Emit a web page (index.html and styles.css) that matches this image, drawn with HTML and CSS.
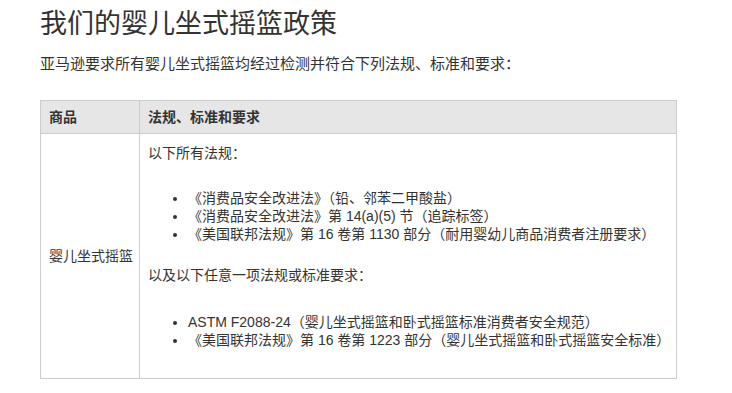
FILE: index.html
```html
<!DOCTYPE html>
<html lang="zh-CN">
<head>
<meta charset="utf-8">
<title>我们的婴儿坐式摇篮政策</title>
<link rel="stylesheet" href="styles.css">
</head>
<body>
<main class="page">
  <h1 class="title">我们的婴儿坐式摇篮政策</h1>
  <p class="intro">亚马逊要求所有婴儿坐式摇篮均经过检测并符合下列法规、标准和要求：</p>
  <table class="policy">
    <colgroup>
      <col class="col-product">
      <col class="col-req">
    </colgroup>
    <thead>
      <tr>
        <th>商品</th>
        <th>法规、标准和要求</th>
      </tr>
    </thead>
    <tbody>
      <tr>
        <td class="product">婴儿坐式摇篮</td>
        <td class="reqs">
          <p class="lead">以下所有法规：</p>
          <ul class="list list-first">
            <li>《消费品安全改进法》（铅、邻苯二甲酸盐）</li>
            <li>《消费品安全改进法》第 14(a)(5) 节（追踪标签）</li>
            <li>《美国联邦法规》第 16 卷第 1130 部分（耐用婴幼儿商品消费者注册要求）</li>
          </ul>
          <p class="lead">以及以下任意一项法规或标准要求：</p>
          <ul class="list list-last">
            <li>ASTM F2088-24（婴儿坐式摇篮和卧式摇篮标准消费者安全规范）</li>
            <li>《美国联邦法规》第 16 卷第 1223 部分（婴儿坐式摇篮和卧式摇篮安全标准）</li>
          </ul>
        </td>
      </tr>
    </tbody>
  </table>
</main>
</body>
</html>
```

FILE: styles.css
```css
html, body {
  margin: 0;
  padding: 0;
  background: #ffffff;
}

body {
  font-family: "Liberation Sans", "Noto Sans CJK SC", sans-serif;
  color: #333333;
}

.page {
  padding: 0 40px;
}

.title {
  margin: 6px 0 11px;
  font-size: 27px;
  line-height: 36px;
  font-weight: normal;
  color: #333333;
}

.intro {
  margin: 0 0 25px;
  font-size: 15px;
  line-height: 22px;
}

.policy {
  width: 637px;
  border-collapse: collapse;
  table-layout: fixed;
  font-size: 14px;
}

.col-product {
  width: 99px;
}

.policy th,
.policy td {
  border: 1px solid #cccccc;
  text-align: left;
}

.policy th {
  background: #e6e6e6;
  font-weight: bold;
  padding: 5px 8px;
  line-height: 22px;
}

.product {
  vertical-align: middle;
  padding: 0 8px;
  line-height: 20px;
  white-space: nowrap;
}

.reqs {
  vertical-align: top;
  padding: 8px 8px 7px;
}

.lead {
  margin: 0;
  line-height: 22px;
}

.list {
  margin: 0;
  padding-left: 40px;
  list-style: disc;
}

.list li {
  line-height: 18px;
}

.list-first {
  margin: 25px 0 21px;
}

.list-last {
  margin: 27px 0 22px;
}
```
